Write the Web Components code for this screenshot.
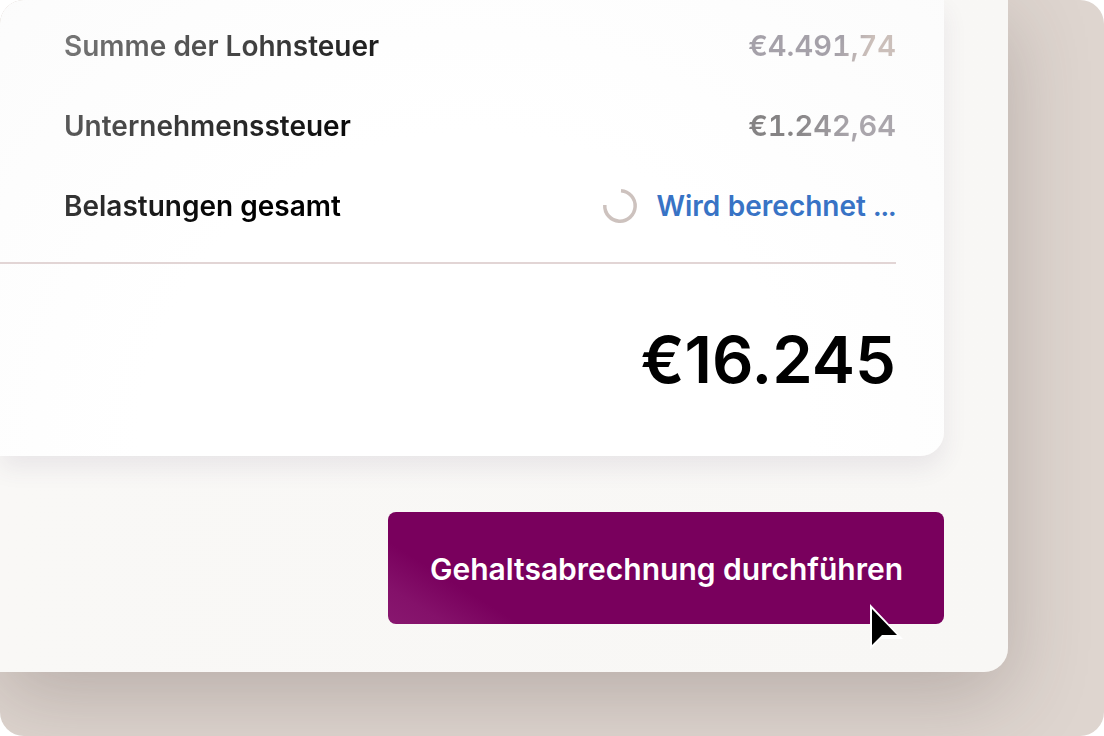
<!DOCTYPE html>
<html lang="de">
<head>
<meta charset="utf-8">
<meta name="viewport" content="width=device-width, initial-scale=1">
<title>Gehaltsabrechnung</title>
<style>
  html, body { margin: 0; min-height: 100%; background: #fff; }
  body { font-family: Inter, "Liberation Sans", sans-serif; color: #000; }
</style>
</head>
<body>
<payroll-stage>
  <payroll-card>
    <payroll-row label="Summe der Lohnsteuer" tone="faint"><span>€4.491,74</span></payroll-row>
    <payroll-row label="Unternehmenssteuer" tone="soft"><span>€1.242,64</span></payroll-row>
    <payroll-row label="Belastungen gesamt" tone="active"><loading-ring slot="icon"></loading-ring><span>Wird berechnet ...</span></payroll-row>
    <span slot="total">€16.245</span>
  </payroll-card>
  <run-button slot="action">Gehaltsabrechnung durchführen</run-button>
</payroll-stage>

<script>
const define = (name, html) => {
  const template = document.createElement('template');
  template.innerHTML = html;
  customElements.define(name, class extends HTMLElement {
    constructor() {
      super();
      this.attachShadow({ mode: 'open' }).append(template.content.cloneNode(true));
    }
    connectedCallback() {
      const label = this.shadowRoot.querySelector('.label');
      if (label) label.textContent = this.getAttribute('label');
    }
  });
};

define('payroll-stage', `
  <style>
    :host { display: block; box-sizing: border-box; min-height: 100vh; padding: 0 96px 64px 0;
      background: #ded5cf; border-radius: 24px; overflow: hidden; }
    main { display: flex; flex-direction: column; box-sizing: border-box; min-height: calc(100vh - 64px);
      padding: 0 64px 48px 0; background: linear-gradient(90deg, #f9f8f6, #f8f7f5);
      border-radius: 24px 0 24px 0; box-shadow: 0 24px 80px rgba(70, 55, 55, .25); }
    footer { display: flex; justify-content: flex-end; margin-top: 56px; }
  </style>
  <main><slot></slot><footer><slot name="action"></slot></footer></main>`);

define('payroll-card', `
  <style>
    :host { display: block; padding: 6px 48px 56px 0; border-radius: 24px 0 24px 0;
      background: radial-gradient(ellipse at 50% 100%, #fff 50%, #fbfbfb 110%);
      box-shadow: 0 12px 24px rgba(75, 55, 100, .09); }
    .rows { padding: 0 0 16px 64px; }
    hr { height: 2px; margin: 0; border: 0; background: #e2d5d5; }
    .total { margin-top: 56px; text-align: right; font-size: 65px; line-height: 80px; font-weight: 600; }
  </style>
  <div class="rows"><slot></slot></div>
  <hr>
  <div class="total"><slot name="total"></slot></div>`);

define('payroll-row', `
  <style>
    :host { display: flex; align-items: center; justify-content: space-between; height: 80px;
      font-size: 28px; line-height: 40px; font-weight: 600; }
    .label, .value { color: transparent; background-clip: text; -webkit-background-clip: text; }
    .label { background-image: linear-gradient(100deg, #777, #1c1c1c); }
    .value { font-size: 29px; font-variant-numeric: tabular-nums; background-image: linear-gradient(110deg, #a5a1a9 60%, #cbbfba 80%); }
    .end { display: flex; align-items: center; gap: 18px; }
    :host([tone="soft"]) .label { background-image: linear-gradient(100deg, #5a5a5a, #080808); }
    :host([tone="soft"]) .value { background-image: linear-gradient(100deg, #858384 30%, #aaa6ac 70%); }
    :host([tone="active"]) .label { background-image: linear-gradient(100deg, #383838, #000 60%); }
    :host([tone="active"]) .value { font-size: 28px; background-image: none; color: #3873c5; }
  </style>
  <span class="label"></span>
  <div class="end"><slot name="icon"></slot><span class="value"><slot></slot></span></div>`);

define('loading-ring', `
  <style>
    :host { display: block; }
    svg { display: block; }
  </style>
  <svg width="36" height="36" viewBox="0 0 36 36" fill="none" aria-hidden="true">
    <path d="M19 2.8A15.2 15.2 0 1 1 2.8 17" stroke="#cdc2be" stroke-width="3.5"/>
  </svg>`);

define('run-button', `
  <style>
    :host { display: block; position: relative; }
    button { display: block; height: 112px; padding: 2px 41px 0 42px; border: 0; border-radius: 8px;
      background: linear-gradient(32deg, #88176f, #84116a 8%, #79005d 18%);
      color: #fff; font: inherit; font-size: 30px; font-weight: 600; cursor: pointer; }
    svg { position: absolute; right: 40px; bottom: -28px; pointer-events: none; }
  </style>
  <button type="button"><slot></slot></button>
  <svg width="36" height="50" viewBox="0 0 36 50" aria-hidden="true">
    <path d="M2 2V48L13 37H35Z" fill="#fff"/>
    <path d="M4 7V43L14 33H29Z" fill="#000"/>
  </svg>`);
</script>
</body>
</html>
